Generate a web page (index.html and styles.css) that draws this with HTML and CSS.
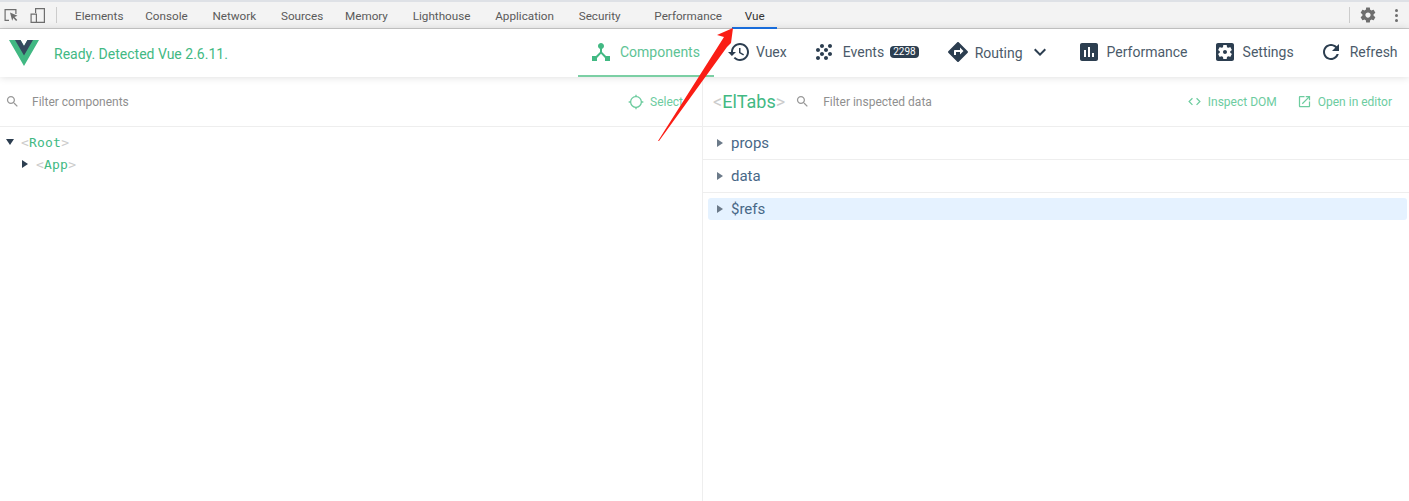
FILE: index.html
```html
<!DOCTYPE html>
<html lang="en">
<head>
<meta charset="utf-8">
<title>Vue Devtools</title>
<link rel="stylesheet" href="styles.css">
</head>
<body>
<div class="app">
  <div class="dt-strip"></div>
  <div class="dt-bar">
    <svg class="dt-icon" viewBox="0 0 16 16"><path d="M1.500 2h12v5h-1.200V3.200H2.700v9.600H6V14H1.500z"/><path d="M7 5.500l7.500 3.200-3 1.200 2.800 3-1.200 1.100-2.800-3-1.100 2.800z"/></svg>
    <svg class="dt-icon dt-device" viewBox="0 0 16 16"><path d="M5 1h10v15H7v-1.200h6.800V2.200H6.200V6H5z"/><path d="M0.500 6.500h6.500V16H0.500zM1.700 7.700v7.100h4.100V7.700z"/></svg>
    <span class="dt-sep"></span>
    <nav class="dt-tabs">
      <span class="dt-tab dt-tab-first">Elements</span>
      <span class="dt-tab">Console</span>
      <span class="dt-tab">Network</span>
      <span class="dt-tab dt-tab-tight">Sources</span>
      <span class="dt-tab">Memory</span>
      <span class="dt-tab">Lighthouse</span>
      <span class="dt-tab">Application</span>
      <span class="dt-tab dt-tab-wide">Security</span>
      <span class="dt-tab dt-tab-perf">Performance</span>
      <span class="dt-tab dt-tab-active">Vue</span>
    </nav>
    <span class="dt-sep dt-sep-right"></span>
    <svg class="dt-gear" viewBox="0 0 24 24"><path d="M19.430 12.980c.04-.32.07-.64.07-.98s-.03-.66-.07-.98l2.110-1.650c.19-.15.24-.42.12-.64l-2-3.460c-.12-.22-.39-.3-.61-.22l-2.490 1c-.52-.4-1.080-.73-1.690-.98l-.38-2.650C14.460 2.180 14.250 2 14 2h-4c-.25 0-.46.18-.49.42l-.38 2.650c-.61.25-1.170.59-1.690.98l-2.490-1c-.23-.09-.49 0-.61.22l-2 3.460c-.13.22-.07.49.12.64l2.110 1.650c-.04.32-.07.65-.07.98s.03.66.07.98l-2.110 1.650c-.19.15-.24.42-.12.64l2 3.460c.12.22.39.3.61.22l2.490-1c.52.4 1.080.73 1.690.98l.38 2.650c.03.24.24.42.49.42h4c.25 0 .46-.18.49-.42l.38-2.650c.61-.25 1.170-.59 1.690-.98l2.490 1c.23.09.49 0 .61-.22l2-3.460c.12-.22.07-.49-.12-.64l-2.110-1.650zM12 15.500c-1.930 0-3.500-1.570-3.500-3.500s1.570-3.500 3.500-3.500 3.500 1.570 3.500 3.500-1.570 3.500-3.500 3.500z"/></svg>
    <span class="dt-dots"><i></i><i></i><i></i></span>
  </div>

  <header class="header">
    <div class="status">
      <svg class="logo" viewBox="0 0 261.76 226.69"><path fill="#41b883" d="M161.096.001l-30.225 52.351L100.647.001H-.005l130.877 226.688L261.749.001z"/><path fill="#34495e" d="M161.096.001l-30.225 52.351L100.647.001H52.346l78.526 136.010L209.398.001z"/></svg>
      <span class="status-text">Ready. Detected Vue 2.6.11.</span>
    </div>
    <nav class="nav">
      <a class="nav-item nav-active"><svg class="nav-icon" viewBox="0 0 24 24"><path d="M17 16l-4-4V8.820C14.160 8.400 15 7.300 15 6c0-1.660-1.340-3-3-3S9 4.340 9 6c0 1.300.84 2.400 2 2.820V12l-4 4H3v5h5v-3.050l4-4.200 4 4.200V21h5v-5h-4z"/></svg><span>Components</span></a>
      <a class="nav-item nav-vuex"><svg class="nav-icon" viewBox="0 0 24 24"><path d="M13 3c-4.970 0-9 4.030-9 9H1l3.890 3.890.07.14L9 12H6c0-3.870 3.130-7 7-7s7 3.130 7 7-3.130 7-7 7c-1.930 0-3.680-.79-4.940-2.060l-1.420 1.420C8.270 19.990 10.510 21 13 21c4.970 0 9-4.030 9-9s-4.030-9-9-9zm-1 5v5l4.280 2.540.72-1.210-3.500-2.080V8H12z"/></svg><span>Vuex</span></a>
      <a class="nav-item"><svg class="nav-icon" viewBox="0 0 24 24"><path d="M10 12c-1.100 0-2 .9-2 2s.9 2 2 2 2-.9 2-2-.9-2-2-2zM6 8c-1.100 0-2 .9-2 2s.9 2 2 2 2-.9 2-2-.9-2-2-2zm0 8c-1.100 0-2 .9-2 2s.9 2 2 2 2-.9 2-2-.9-2-2-2zm12-8c1.100 0 2-.9 2-2s-.9-2-2-2-2 .9-2 2 .9 2 2 2zm-4 8c-1.100 0-2 .9-2 2s.9 2 2 2 2-.9 2-2-.9-2-2-2zm4-4c-1.100 0-2 .9-2 2s.9 2 2 2 2-.9 2-2-.9-2-2-2zm-4-4c-1.100 0-2 .9-2 2s.9 2 2 2 2-.9 2-2-.9-2-2-2zm-4-4c-1.100 0-2 .9-2 2s.9 2 2 2 2-.9 2-2-.9-2-2-2z"/></svg><span>Events</span><span class="badge">2298</span></a>
      <a class="nav-item nav-routing"><svg class="nav-icon" viewBox="0 0 24 24"><path d="M21.710 11.290l-9-9c-.39-.39-1.020-.39-1.410 0l-9 9c-.39.39-.39 1.020 0 1.410l9 9c.39.39 1.020.39 1.410 0l9-9c.39-.38.39-1.010 0-1.410zM14 14.500V12h-4v3H8v-4c0-.55.45-1 1-1h5V7.500l3.500 3.500-3.500 3.500z"/></svg><span class="routing-label">Routing</span><svg class="chevron" viewBox="0 0 24 24"><path d="M7.410 8.590L12 13.170l4.590-4.580L18 10l-6 6-6-6 1.410-1.410z"/></svg></a>
      <a class="nav-item nav-tight"><svg class="nav-icon" viewBox="0 0 24 24"><path d="M19 3H5c-1.100 0-2 .9-2 2v14c0 1.100.9 2 2 2h14c1.100 0 2-.9 2-2V5c0-1.100-.9-2-2-2zM9 17H7v-7h2v7zm4 0h-2V7h2v10zm4 0h-2v-4h2v4z"/></svg><span>Performance</span></a>
      <a class="nav-item nav-tight"><svg class="nav-icon" viewBox="0 0 24 24"><path d="M12 10c-1.100 0-2 .9-2 2s.9 2 2 2 2-.9 2-2-.9-2-2-2zm7-7H5c-1.110 0-2 .9-2 2v14c0 1.100.89 2 2 2h14c1.110 0 2-.9 2-2V5c0-1.100-.89-2-2-2zm-1.750 9c0 .23-.02.46-.05.68l1.480 1.160c.13.11.17.3.08.45l-1.400 2.420c-.09.15-.27.21-.43.15l-1.740-.7c-.36.28-.76.51-1.180.69l-.26 1.850c-.03.17-.18.3-.35.3h-2.800c-.17 0-.32-.13-.35-.29l-.26-1.850c-.43-.18-.82-.41-1.180-.69l-1.740.7c-.16.06-.34 0-.43-.15l-1.400-2.420c-.09-.15-.05-.34.08-.45l1.480-1.160c-.03-.23-.05-.46-.05-.69 0-.23.02-.46.05-.68l-1.480-1.160c-.13-.11-.17-.3-.08-.45l1.400-2.420c.09-.15.27-.21.43-.15l1.740.7c.36-.28.76-.51 1.180-.69l.26-1.850c.03-.17.18-.3.35-.3h2.800c.17 0 .32.13.35.29l.26 1.850c.43.18.82.41 1.180.69l1.740-.7c.16-.06.34 0 .43.15l1.400 2.420c.09.15.05.34-.08.45l-1.480 1.160c.03.23.05.46.05.69z"/></svg><span>Settings</span></a>
      <a class="nav-item"><svg class="nav-icon" viewBox="0 0 24 24"><path d="M17.650 6.350C16.200 4.900 14.210 4 12 4c-4.420 0-7.990 3.580-7.990 8s3.570 8 7.990 8c3.730 0 6.840-2.550 7.730-6h-2.080c-.82 2.330-3.040 4-5.650 4-3.310 0-6-2.690-6-6s2.690-6 6-6c1.660 0 3.140.69 4.220 1.780L13 11h7V4l-2.350 2.350z"/></svg><span>Refresh</span></a>
    </nav>
  </header>

  <main class="split">
    <section class="pane pane-left">
      <div class="action-row">
        <svg class="search" viewBox="0 0 24 24"><path d="M15.500 14h-.79l-.28-.27C15.410 12.590 16 11.110 16 9.500 16 5.910 13.090 3 9.500 3S3 5.910 3 9.500 5.910 16 9.500 16c1.610 0 3.090-.59 4.230-1.570l.27.28v.79l5 4.990L20.490 19l-4.990-5zm-6 0C7.010 14 5 11.990 5 9.500S7.010 5 9.500 5 14 7.010 14 9.500 11.990 14 9.500 14z"/></svg>
        <span class="placeholder">Filter components</span>
        <a class="action action-select"><svg class="action-icon-lg" viewBox="0 0 24 24"><path d="M20.940 11c-.46-4.170-3.770-7.480-7.940-7.940V1h-2v2.060C6.830 3.520 3.520 6.830 3.060 11H1v2h2.060c.46 4.170 3.770 7.480 7.940 7.940V23h2v-2.060c4.170-.46 7.480-3.770 7.940-7.940H23v-2h-2.060zM12 19c-3.870 0-7-3.130-7-7s3.130-7 7-7 7 3.130 7 7-3.130 7-7 7z"/></svg><span>Select</span></a>
      </div>
      <div class="tree">
        <div class="node"><i class="tri tri-down"></i><span class="tag"><b>&lt;</b>Root<b>&gt;</b></span></div>
        <div class="node node-child"><i class="tri tri-right"></i><span class="tag"><b>&lt;</b>App<b>&gt;</b></span></div>
      </div>
    </section>
    <section class="pane pane-right">
      <div class="action-row action-row-right">
        <span class="comp-name"><b>&lt;</b>ElTabs<b>&gt;</b></span>
        <svg class="search search-right" viewBox="0 0 24 24"><path d="M15.500 14h-.79l-.28-.27C15.410 12.590 16 11.110 16 9.500 16 5.910 13.090 3 9.500 3S3 5.910 3 9.500 5.910 16 9.500 16c1.610 0 3.090-.59 4.230-1.570l.27.28v.79l5 4.990L20.490 19l-4.990-5zm-6 0C7.010 14 5 11.990 5 9.500S7.010 5 9.500 5 14 7.010 14 9.500 11.990 14 9.500 14z"/></svg>
        <span class="placeholder placeholder-right">Filter inspected data</span>
        <a class="action action-dom"><svg class="action-icon" viewBox="0 0 24 24"><path d="M9.400 16.600L4.800 12l4.600-4.600L8 6l-6 6 6 6 1.400-1.400zm5.200 0l4.600-4.600-4.600-4.600L16 6l6 6-6 6-1.400-1.400z"/></svg><span>Inspect DOM</span></a>
        <a class="action action-editor"><svg class="action-icon" viewBox="0 0 24 24"><path d="M19 19H5V5h7V3H5c-1.110 0-2 .9-2 2v14c0 1.100.89 2 2 2h14c1.100 0 2-.9 2-2v-7h-2v7zM14 3v2h3.590l-9.830 9.830 1.410 1.410L19 6.410V10h2V3h-7z"/></svg><span>Open in editor</span></a>
      </div>
      <div class="section"><div class="row"><i class="tri-small"></i>props</div></div>
      <div class="section"><div class="row"><i class="tri-small"></i>data</div></div>
      <div class="section section-last"><div class="row row-selected"><i class="tri-small"></i>$refs</div></div>
    </section>
  </main>

  <svg class="red-arrow" viewBox="0 0 1409 501"><polygon points="733,28 717,35 724,37 658,141 659,141 727,47 731,43"/></svg>
</div>
</body>
</html>
```
FILE: styles.css
```css
* { box-sizing: border-box; }
html, body { margin: 0; height: 100%; background: #fff; }
body { font-family: Roboto, "Liberation Sans", sans-serif; overflow: hidden; }
a { text-decoration: none; }

.app { position: relative; width: 1409px; height: 501px; display: flex; flex-direction: column; overflow: hidden; }

.dt-strip { height: 2px; background: #dee1e6; flex: none; }
.dt-bar { height: 27px; flex: none; display: flex; align-items: center; background: #f3f3f3; border-bottom: 1px solid #ccc; color: #5a5a5a; padding-left: 3px; }
.dt-icon { width: 16px; height: 16px; fill: #6e6e6e; flex: none; margin-right: 11px; }
.dt-device { margin-right: 10px; }
.dt-sep { width: 1px; height: 16px; background: #ccc; flex: none; }
.dt-tabs { display: flex; height: 26px; margin-left: 5.6px; font-size: 11.7px; }
.dt-tab { padding: 0 12.4px; line-height: 29px; white-space: nowrap; }
.dt-tab-first { margin-right: -3px; }
.dt-tab-tight { margin-right: -3px; }
.dt-tab-wide { margin-right: 9px; }
.dt-tab-perf { margin-right: -2px; }
.dt-tab-active { border-bottom: 2px solid #1a73e8; margin-bottom: -1px; color: #333; }
.dt-sep-right { margin-left: auto; }
.dt-gear { width: 18px; height: 18px; fill: #6e6e6e; margin-left: 9px; flex: none; }
.dt-dots { display: flex; flex-direction: column; gap: 2px; margin: 0 11px 0 18px; width: 3px; flex: none; }
.dt-dots i { width: 3px; height: 3px; border-radius: 50%; background: #6e6e6e; }

.header { height: 48px; flex: none; display: flex; background: #fff; box-shadow: 0 0 8px rgba(0,0,0,.15); position: relative; z-index: 1; }
.status { width: 578px; flex: none; display: flex; align-items: center; padding-left: 9px; }
.logo { width: 30px; height: 26px; flex: none; margin-right: 15px; }
.status-text { color: #42b983; font-size: 14px; padding-top: 2px; }
.nav { display: flex; flex: none; }
.nav-item { display: flex; align-items: center; height: 48px; padding: 0 14px 2px 11px; color: #2c3e50; font-size: 14px; white-space: nowrap; }
.nav-item span { opacity: .85; }
.nav-icon { width: 24px; height: 24px; fill: #2c3e50; flex: none; margin-right: 7px; }
.nav-active { color: #42b983; border-bottom: 2px solid #7bcfa4; padding-bottom: 0; }
.nav-active .nav-icon { fill: #42b983; }
.nav-vuex { padding-left: 13px; }
.nav-vuex .nav-icon { margin-right: 5px; }
.nav-tight .nav-icon { margin-right: 6px; }
.nav-routing { padding-left: 13px; }
.nav-routing .nav-icon { margin-right: 5px; }
.routing-label { padding-top: 2px; }
.chevron { width: 24px; height: 24px; fill: #2c3e50; margin-left: 5px; }
.badge { background: #2c3e50; color: #fff; font-size: 10px; border-radius: 4px; padding: 0 3px; line-height: 12px; margin-left: 6px; opacity: 1 !important; }

.split { flex: 1; display: flex; min-height: 0; }
.pane-left { width: 703px; flex: none; border-right: 1px solid #eee; }
.pane-right { flex: 1; min-width: 0; }
.action-row { height: 50px; display: flex; align-items: center; border-bottom: 1px solid #eee; font-size: 12px; padding-left: 5px; }
.search { width: 15px; height: 15px; fill: #999; flex: none; }
.placeholder { color: #8f8f8f; margin-left: 12px; }
.placeholder-right { margin-left: 13px; }
.action { display: flex; align-items: center; color: #6dcc9f; }
.action-select { margin-left: auto; margin-right: 19px; }
.action-icon-lg { width: 16px; height: 16px; fill: #6dcc9f; margin-right: 6px; }
.action-icon { width: 15px; height: 15px; fill: #6dcc9f; margin-right: 6px; }
.action-row-right { padding-left: 10px; }
.comp-name { color: #42b983; font-size: 18px; }
.comp-name b { color: #ccc; font-weight: 400; }
.search-right { margin-left: 10px; }
.action-dom { margin-left: auto; }
.action-editor { margin-left: 20px; margin-right: 17px; }

.tree { padding-top: 4px; }
.node { height: 22px; display: flex; align-items: center; padding-left: 6px; font-family: "DejaVu Sans Mono", monospace; font-size: 13px; letter-spacing: .2px; }
.node-child { padding-left: 22px; }
.tri { width: 0; height: 0; flex: none; }
.tri-down { border-left: 4px solid transparent; border-right: 4px solid transparent; border-top: 6px solid #2c3e50; margin-right: 7px; }
.tri-right { border-top: 4px solid transparent; border-bottom: 4px solid transparent; border-left: 6px solid #2c3e50; margin-right: 8px; }
.tag { color: #42b983; }
.tag b { color: #ccc; font-weight: 400; }

.section { height: 33px; padding: 5px 2px 0 5px; border-bottom: 1px solid #eee; }
.section-last { border-bottom: none; }
.row { height: 22px; display: flex; align-items: center; padding-left: 9px; font-size: 15px; color: #486887; border-radius: 3px; }
.row-selected { background: #e5f2ff; }
.tri-small { width: 0; height: 0; border-top: 4px solid transparent; border-bottom: 4px solid transparent; border-left: 6px solid #6b7a89; margin-right: 8px; flex: none; }

.red-arrow { position: absolute; left: 0; top: 0; width: 1409px; height: 501px; z-index: 5; pointer-events: none; }
.red-arrow polygon { fill: #fa1d15; }
```
